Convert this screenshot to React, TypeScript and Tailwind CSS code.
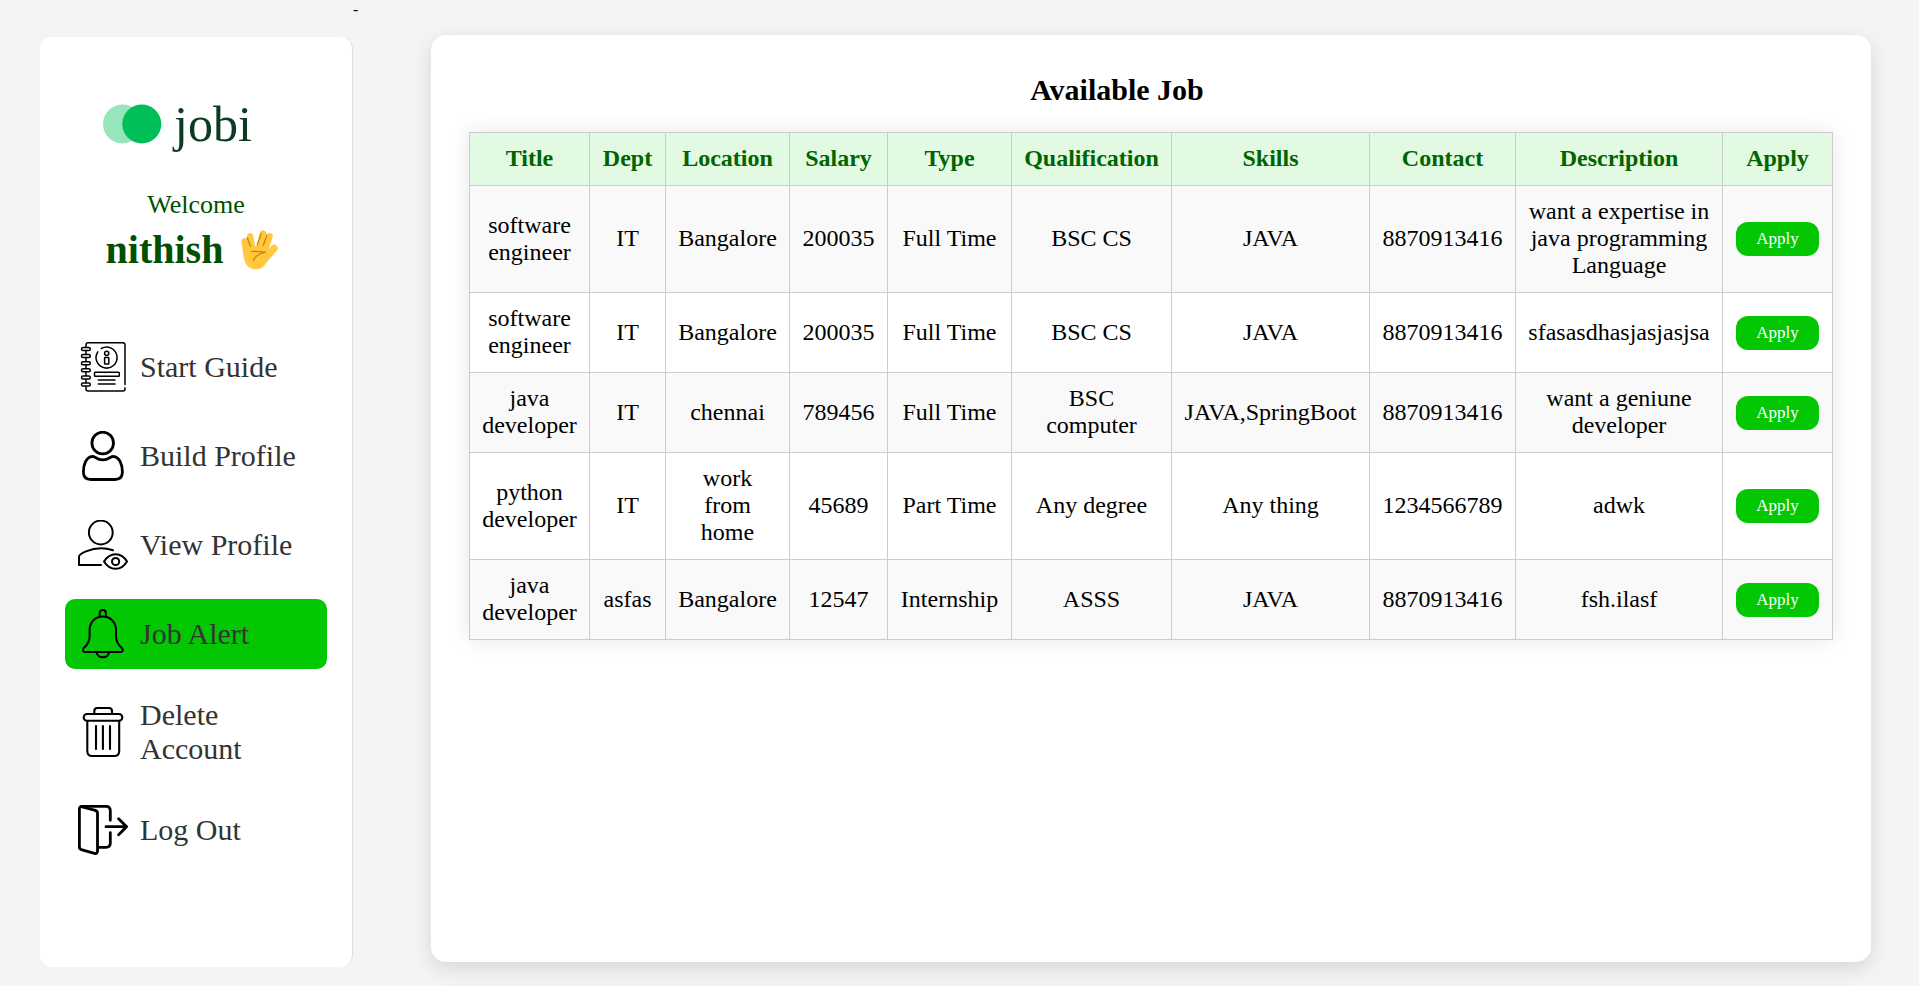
import type { ReactNode } from "react";

type Job = {
  title: string;
  dept: string;
  location: string;
  salary: string;
  type: string;
  qualification: string;
  skills: string;
  contact: string;
  description: string;
};

const jobs: Job[] = [
  { title: "software engineer", dept: "IT", location: "Bangalore", salary: "200035", type: "Full Time", qualification: "BSC CS", skills: "JAVA", contact: "8870913416", description: "want a expertise in java programming Language" },
  { title: "software engineer", dept: "IT", location: "Bangalore", salary: "200035", type: "Full Time", qualification: "BSC CS", skills: "JAVA", contact: "8870913416", description: "sfasasdhasjasjasjsa" },
  { title: "java developer", dept: "IT", location: "chennai", salary: "789456", type: "Full Time", qualification: "BSC computer", skills: "JAVA,SpringBoot", contact: "8870913416", description: "want a geniune developer" },
  { title: "python developer", dept: "IT", location: "work from home", salary: "45689", type: "Part Time", qualification: "Any degree", skills: "Any thing", contact: "1234566789", description: "adwk" },
  { title: "java developer", dept: "asfas", location: "Bangalore", salary: "12547", type: "Internship", qualification: "ASSS", skills: "JAVA", contact: "8870913416", description: "fsh.ilasf" },
];

const columns = [
  { name: "Title", width: "w-[120px]" },
  { name: "Dept", width: "w-[76px]" },
  { name: "Location", width: "w-[124px]" },
  { name: "Salary", width: "w-[98px]" },
  { name: "Type", width: "w-[124px]" },
  { name: "Qualification", width: "w-[160px]" },
  { name: "Skills", width: "w-[198px]" },
  { name: "Contact", width: "w-[146px]" },
  { name: "Description", width: "w-[207px]" },
  { name: "Apply", width: "w-[110px]" },
];

function Icon({ stroke, children }: { stroke: number; children: ReactNode }) {
  return (
    <svg
      viewBox="0 0 50 50"
      className="size-[50px] shrink-0"
      fill="none"
      stroke="#000"
      strokeWidth={stroke}
      strokeLinecap="round"
      strokeLinejoin="round"
      aria-hidden="true"
    >
      {children}
    </svg>
  );
}

function GuideIcon() {
  return (
    <Icon stroke={1.5}>
      <path d="M47 42.500V3Q47 .8 44.800 .8H10.200Q8 .8 8 3V47Q8 49 10.200 49H44.800Q47 49 47 47V45.700" />
      {[7, 14.1, 21.2, 28.3, 35.4, 42.5].map((y) => (
        <rect key={y} x="3.5" y={y - 1.5} width="8.8" height="3" rx="1.5" fill="#fff" />
      ))}
      <path d="M23.300 6.500A10.500 10.500 0 1 1 19.800 9.800" />
      <circle cx="28.7" cy="11.3" r="2.1" />
      <rect x="26.6" y="15.5" width="4.2" height="6.5" rx=".6" />
      <rect x="16.5" y="30.3" width="24.8" height="4" rx=".8" />
      <path d="M20.300 38H37M20.300 41.900H37" />
    </Icon>
  );
}

function PersonIcon() {
  return (
    <Icon stroke={2.8}>
      <circle cx="24.7" cy="12" r="10.8" />
      <path d="M14.500 25.300C8 26 5.400 33.500 5.400 41C5.400 46 8 48.500 13 48.500H36.800C41.800 48.500 44.400 46 44.400 41C44.400 33.500 41.600 26 35.100 25.300C32.800 25.300 30.500 28.900 24.800 28.900S16.800 25.300 14.500 25.300Z" />
    </Icon>
  );
}

function PersonEyeIcon() {
  return (
    <Icon stroke={2}>
      <circle cx="22.8" cy="12.5" r="11.9" />
      <path d="M35 30.300C26 27 17 27.600 8 31.300C4 33 1 34.600 1 36.500V45H23" />
      <path d="M26 41.500C32 31.700 43.300 31.700 49 41.500C43.300 51.300 32 51.300 26 41.500Z" />
      <circle cx="37.6" cy="41.5" r="3.6" />
    </Icon>
  );
}

function BellIcon() {
  return (
    <Icon stroke={2}>
      <path d="M21.700 7.500V4.100A3.100 3.100 0 0 1 27.900 4.100V7.500" />
      <path d="M24.800 7.600C17 7.600 11.600 13.500 11.600 21V27C11.600 33 9 36.500 5.600 39.300C4 41.200 5 43 7 43H42.600C44.600 43 45.600 41.200 44 39.300C40.600 36.500 38 33 38 27V21C38 13.500 32.600 7.600 24.800 7.600Z" />
      <path d="M18.700 43.500A6.200 5.500 0 0 0 31 43.500" />
    </Icon>
  );
}

function TrashIcon() {
  return (
    <Icon stroke={2.1}>
      <path d="M16.300 7V4.200Q16.300 1 19.500 1H30.800Q34 1 34 4.200V7" />
      <rect x="5.7" y="7" width="38.6" height="6.8" rx="3.4" />
      <path d="M9.300 14V44Q9.300 49 14.300 49H36.200Q41.200 49 41.200 44V14" />
      <path d="M18 19V42M24.900 19V42M32 19V42" />
    </Icon>
  );
}

function LogOutIcon() {
  return (
    <Icon stroke={2.8}>
      <path d="M1.400 3.600C1.400 2 2.600 1.300 4.200 1.800L17.300 5.300C18.800 5.800 19.500 6.800 19.500 8.300V46C19.500 48 18.300 49 16.500 48.400L3.300 44.600C2 44.200 1.400 43.400 1.400 42Z" />
      <path d="M3.500 1.400H28Q32.300 1.400 32.300 5.700V15.300M32.300 27.700V38Q32.300 42.300 28 42.300H20.500" />
      <path d="M28 21.700H48.600M40.600 13.700L48.600 21.700L40.600 29.700" />
    </Icon>
  );
}

function HandEmoji() {
  return (
    <svg viewBox="0 0 37 40" className="h-10 w-[37px]" fill="none" strokeLinecap="round" role="img" aria-label="Vulcan salute">
      <g stroke="#ffc83d" strokeWidth="6.4">
        <path d="M3.500 11.300L6 27M9.200 6.500L12 25M22 3.500L17 25M28.600 6.300L22.500 25" />
        <path d="M33.200 18.300L23 30" strokeWidth="7" />
      </g>
      <path d="M4 17L8 14L15 16L24 16L27 21L27.500 28C25 35 21 39.300 15.500 39.300C8 39.300 4 35 2.800 27Z" fill="#ffc83d" />
      <g stroke="#d67d00" strokeWidth="1.200">
        <path d="M6.200 7.500L9.500 16.500M25.800 5L22.300 15.500M20.200 3.500L16.200 15" />
        <path d="M10.300 21.500C15 21.200 19 21.700 24.500 22.200C18 23.500 14 26.500 12.300 30.700" strokeLinejoin="round" />
      </g>
    </svg>
  );
}

const menu = [
  { label: "Start Guide", icon: <GuideIcon /> },
  { label: "Build Profile", icon: <PersonIcon /> },
  { label: "View Profile", icon: <PersonEyeIcon /> },
  { label: "Job Alert", icon: <BellIcon />, active: true },
  { label: "Delete Account", icon: <TrashIcon /> },
  { label: "Log Out", icon: <LogOutIcon /> },
];

function Sidebar() {
  return (
    <aside className="mt-[37px] mb-[19px] ml-10 w-[313px] shrink-0 rounded-xl border-r border-[#ddd] bg-white px-[25px] pt-[57px]">
      <div className="flex h-[60px] items-center gap-3 pl-[38px]">
        <svg viewBox="0 0 59 40" className="h-10 w-[59px]" aria-hidden="true">
          <circle cx="19.5" cy="20" r="19.5" fill="#97e6bb" />
          <circle cx="38.8" cy="20" r="19.5" fill="#00bf58" />
        </svg>
        <span className="text-[50px] leading-[60px] text-[#0b3b22]">jobi</span>
      </div>
      <div className="mt-9 text-center text-[#005000]">
        <p className="text-[26px] leading-[29px]">Welcome</p>
        <div className="flex items-center justify-center gap-[18px] pt-2 pr-2">
          <h1 className="text-[40px] leading-[45px] font-bold">nithish</h1>
          <HandEmoji />
        </div>
      </div>
      <nav className="mt-[60px] flex flex-col gap-[19px]">
        {menu.map((item) => (
          <a
            key={item.label}
            href="#"
            aria-current={item.active ? "page" : undefined}
            className={
              item.active
                ? "flex items-center gap-3 rounded-[10px] bg-[#03c703] px-[13px] py-2.5 text-[30px] leading-[34px] text-[#333]"
                : "flex items-center gap-3 rounded-[10px] px-[13px] py-2.5 text-[30px] leading-[34px] text-[#333]"
            }
          >
            {item.icon}
            <span>{item.label}</span>
          </a>
        ))}
      </nav>
    </aside>
  );
}

function JobTable() {
  return (
    <table className="w-full table-fixed border-collapse text-center text-2xl leading-[27px] shadow-[0_0_20px_rgba(0,0,0,0.1)]">
      <thead>
        <tr className="bg-[#e1fae1] text-[#006400]">
          {columns.map((column) => (
            <th key={column.name} scope="col" className={`${column.width} border border-[#ccc] px-3 pt-3 pb-[13px] font-bold`}>
              {column.name}
            </th>
          ))}
        </tr>
      </thead>
      <tbody>
        {jobs.map((job, index) => (
          <tr key={index} className="odd:bg-[#f9f9f9] even:bg-white">
            {Object.values(job).map((value, cell) => (
              <td key={cell} className="border border-[#ccc] px-3 pt-3 pb-[13px]">
                {value}
              </td>
            ))}
            <td className="border border-[#ccc] px-[13px]">
              <button type="button" className="block h-[34px] w-full rounded-xl bg-[#03c703] text-[17px] leading-5 text-white">
                Apply
              </button>
            </td>
          </tr>
        ))}
      </tbody>
    </table>
  );
}

export default function App() {
  return (
    <div className="flex min-h-screen bg-[#f4f4f4] font-['Liberation_Serif','Times_New_Roman',serif] text-black">
      <Sidebar />
      <span className="w-[78px] shrink-0 text-base leading-5">-</span>
      <main className="mt-[35px] mr-12 mb-6 min-w-0 flex-1 rounded-[15px] bg-white p-[38px] shadow-[0_6px_20px_rgba(0,0,0,0.12)]">
        <h2 className="mb-[25px] pr-[68px] text-center text-[30px] leading-[34px] font-bold">Available Job</h2>
        <JobTable />
      </main>
    </div>
  );
}
